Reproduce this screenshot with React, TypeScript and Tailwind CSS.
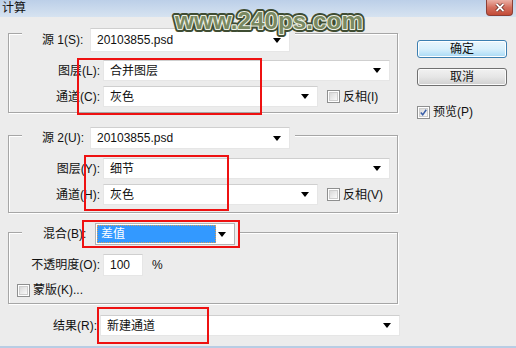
import React from "react";

const Arrow = () => (
  <svg width="8" height="5" viewBox="0 0 8 5" className="shrink-0">
    <polygon points="0,0 8,0 4,5" fill="#000" />
  </svg>
);

function Field({ text, cls, arrow = true }: { text: string; cls: string; arrow?: boolean }) {
  return (
    <div
      className={`flex items-center justify-between bg-white border border-[#e6e6e6] border-t-[#cfcfcf] pl-[6px] pr-[8px] shrink-0 ${cls}`}
    >
      <span className="text-[12px] leading-none text-[#111]">{text}</span>
      {arrow && <Arrow />}
    </div>
  );
}

function Check({ checked = false }: { checked?: boolean }) {
  return (
    <div className="w-[13px] h-[13px] border border-[#8e8f8f] bg-white p-[1px] shrink-0">
      <div className="w-full h-full border border-[#cdcdcd] bg-linear-to-br from-[#d9d9d9] to-[#fafafa] flex items-center justify-center">
        {checked && (
          <svg width="9" height="9" viewBox="0 0 9 9">
            <path d="M1 4.5 L3.5 7.5 L8 1" stroke="#3a5fa8" strokeWidth="2" fill="none" />
          </svg>
        )}
      </div>
    </div>
  );
}

const groupCls =
  "relative border border-[#a6a6a6] shadow-[inset_1px_1px_0_#ffffff,1px_1px_0_#ffffff]";

export default function App() {
  return (
    <div className="w-[516px] h-[348px] flex flex-col relative overflow-hidden bg-[#ececec] font-['Liberation_Sans','Noto_Sans_CJK_SC',sans-serif] text-[12px] text-[#111]">
      {/* Title bar */}
      <div className="h-[17px] flex items-start justify-between bg-linear-to-b from-[#bccfe8] to-[#d6e3f1] pl-[2px] pr-[3px] shrink-0">
        <span className="pt-[2px] leading-[13px] text-[12px]">计算</span>
        <div className="w-[27px] h-[16px] rounded-b-[4px] border border-t-0 border-[#8c3f35] bg-linear-to-b from-[#eab0a5] via-[#d46f5e] to-[#c24b37] flex items-center justify-center">
          <svg width="10" height="9" viewBox="0 0 10 9">
            <path d="M1.5 1 L8.5 8 M8.5 1 L1.5 8" stroke="#5a2018" strokeWidth="3.2" />
            <path d="M1.5 1 L8.5 8 M8.5 1 L1.5 8" stroke="#ffffff" strokeWidth="1.8" />
          </svg>
        </div>
      </div>

      <div className="flex flex-1 items-start">
        {/* Left column */}
        <div className="ml-[8px] w-[390px] flex flex-col shrink-0">
          {/* Group 1 */}
          <div className={`${groupCls} mt-[16px] h-[80px] pt-[26px] flex flex-col gap-[5px]`}>
            <div className="absolute left-[13px] top-[-6px] flex items-center bg-[#ececec] pl-[20px] pr-[5px]">
              <span className="w-[48px]">源 1(S):</span>
              <Field text="20103855.psd" cls="w-[200px] h-[24px]" />
            </div>
            <div className="flex items-center">
              <span className="w-[94px] text-right pr-[3px]">图层(L):</span>
              <Field text="合并图层" cls="w-[287px] h-[21px]" />
            </div>
            <div className="flex items-center">
              <span className="w-[94px] text-right pr-[3px]">通道(C):</span>
              <Field text="灰色" cls="w-[215px] h-[21px]" />
              <div className="ml-[9px]">
                <Check />
              </div>
              <span className="ml-[3px]">反相(I)</span>
            </div>
          </div>

          {/* Group 2 */}
          <div className={`${groupCls} mt-[22px] h-[78px] pt-[22px] flex flex-col gap-[5px]`}>
            <div className="absolute left-[13px] top-[-9px] flex items-center bg-[#ececec] pl-[20px] pr-[5px]">
              <span className="w-[48px]">源 2(U):</span>
              <Field text="20103855.psd" cls="w-[200px] h-[22px]" />
            </div>
            <div className="flex items-center">
              <span className="w-[94px] text-right pr-[3px]">图层(Y):</span>
              <Field text="细节" cls="w-[287px] h-[21px]" />
            </div>
            <div className="flex items-center">
              <span className="w-[94px] text-right pr-[3px]">通道(H):</span>
              <Field text="灰色" cls="w-[215px] h-[21px]" />
              <div className="ml-[9px]">
                <Check />
              </div>
              <span className="ml-[3px]">反相(V)</span>
            </div>
          </div>

          {/* Group 3 */}
          <div className={`${groupCls} mt-[19px] h-[72px] pt-[21px] flex flex-col`}>
            <div className="absolute left-[13px] top-[-10px] flex items-center bg-[#ececec] pl-[21px] pr-[5px]">
              <span className="w-[52px]">混合(B):</span>
              <div className="w-[140px] h-[22px] bg-white border border-[#b4b4b4] flex items-center justify-between pl-[1px] pr-[8px]">
                <div className="w-[119px] h-[18px] bg-[#3399ff] border border-dotted border-[#d9a05a] flex items-center pl-[3px]">
                  <span className="text-white leading-none">差值</span>
                </div>
                <Arrow />
              </div>
            </div>
            <div className="flex items-center">
              <span className="w-[94px] text-right pr-[3px]">不透明度(O):</span>
              <Field text="100" cls="w-[40px] h-[22px]" arrow={false} />
              <span className="ml-[9px]">%</span>
            </div>
            <div className="flex items-center mt-[5px] pl-[8px]">
              <Check />
              <span className="ml-[3px]">蒙版(K)...</span>
            </div>
          </div>

          {/* Result */}
          <div className="flex items-center mt-[11px]">
            <span className="w-[92px] text-right pr-[3px] shrink-0">结果(R):</span>
            <Field text="新建通道" cls="w-[300px] h-[21px]" />
          </div>
        </div>

        {/* Right column */}
        <div className="ml-[19px] w-[90px] pt-[23px] flex flex-col shrink-0">
          <div className="h-[18px] rounded-[3px] border border-[#3c7fb1] bg-linear-to-b from-[#eaf6fd] via-[#d9f0fc] to-[#a7d9f5] flex items-center justify-center shadow-[inset_0_0_0_1px_#ffffff]">
            确定
          </div>
          <div className="mt-[10px] h-[18px] rounded-[3px] border border-[#707070] bg-linear-to-b from-[#f2f2f2] via-[#e6e6e6] to-[#cfcfcf] flex items-center justify-center shadow-[inset_0_0_0_1px_#fbfbfb]">
            取消
          </div>
          <div className="mt-[17px] flex items-center">
            <Check checked />
            <span className="ml-[3px]">预览(P)</span>
          </div>
        </div>
      </div>

      <div className="h-[2px] bg-[#b8cde4] shrink-0" />

      {/* Watermark */}
      <svg className="absolute left-[171px] top-[4px]" width="198" height="34" viewBox="0 0 198 34">
        <text
          x="4"
          y="25"
          fontSize="24"
          fontWeight="bold"
          fontFamily="'Liberation Sans', Arial, sans-serif"
          textLength="188"
          lengthAdjust="spacingAndGlyphs"
          fill="#3f4d33"
          stroke="#3f4d33"
          strokeWidth="6"
          strokeLinejoin="round"
        >
          www.240ps.com
        </text>
        <text
          x="4"
          y="25"
          fontSize="24"
          fontWeight="bold"
          fontFamily="'Liberation Sans', Arial, sans-serif"
          textLength="188"
          lengthAdjust="spacingAndGlyphs"
          fill="#7a8961"
          stroke="#eef1e6"
          strokeWidth="2.2"
          strokeLinejoin="round"
          style={{ paintOrder: "stroke" }}
        >
          www.240ps.com
        </text>
      </svg>

      {/* Red highlight boxes */}
      <div className="absolute left-[77px] top-[58px] w-[185px] h-[57px] border-2 border-[#ee1111]" />
      <div className="absolute left-[84px] top-[155px] w-[145px] h-[56px] border-2 border-[#ee1111]" />
      <div className="absolute left-[82px] top-[220px] w-[158px] h-[28px] border-2 border-[#ee1111]" />
      <div className="absolute left-[97px] top-[307px] w-[112px] h-[37px] border-2 border-[#ee1111]" />
    </div>
  );
}
